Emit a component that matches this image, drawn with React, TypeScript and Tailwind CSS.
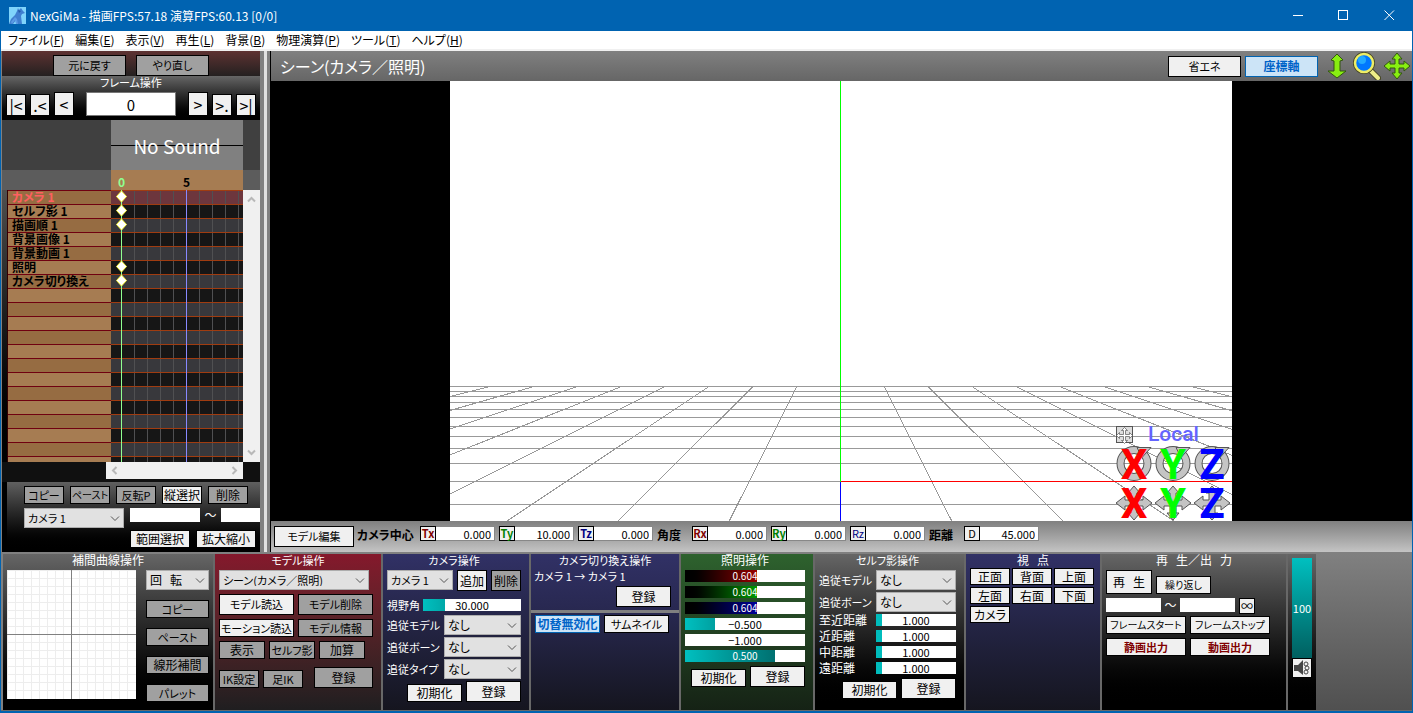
import { useId } from "react";
import type { ReactNode } from "react";
import clsx from "clsx";

const menus = [
  ["ファイル", "F"],
  ["編集", "E"],
  ["表示", "V"],
  ["再生", "L"],
  ["背景", "B"],
  ["物理演算", "P"],
  ["ツール", "T"],
  ["ヘルプ", "H"],
];

const tracks = [
  { name: "カメラ 1", key: true },
  { name: "セルフ影 1", key: true },
  { name: "描画順 1", key: true },
  { name: "背景画像 1", key: false },
  { name: "背景動画 1", key: false },
  { name: "照明", key: true },
  { name: "カメラ切り換え", key: true },
];

const ROW = 14;
const FRAME = 13;
const rows = Array.from({ length: 60 }, (_, i) => i);
const frames = Array.from({ length: 9 }, (_, i) => i);

type BtnProps = {
  children: ReactNode;
  className?: string;
  off?: boolean;
  label?: string;
};

const Btn = ({ children, className, off, label }: BtnProps) => (
  <button
    type="button"
    aria-label={label}
    className={clsx(
      "flex shrink-0 items-center justify-center whitespace-nowrap border border-black leading-none text-black",
      off ? "bg-[#a0a0a0]" : "bg-[#f0f0f0]",
      className
    )}
  >
    {children}
  </button>
);

type ComboProps = {
  value: string;
  label: string;
  id?: string;
  className?: string;
};

const Combo = ({ value, label, id, className }: ComboProps) => (
  <div className={clsx("relative h-5 shrink-0", className)}>
    <select
      id={id}
      aria-label={label}
      className="h-5 w-full appearance-none border border-[#adadad] bg-[#e1e1e1] pl-[3px] leading-none text-black"
    >
      <option>{value}</option>
    </select>
    <svg
      className="pointer-events-none absolute right-1 top-[7px]"
      width="10"
      height="7"
      fill="none"
      stroke="#555"
    >
      <path d="M1 1.5 5 5.5 9 1.5" />
    </svg>
  </div>
);

const ComboRow = ({ label, className }: { label: string; className: string }) => {
  const id = useId();
  return (
    <div className="flex h-5 items-center justify-between">
      <label htmlFor={id} className="whitespace-nowrap text-[11px]">
        {label}
      </label>
      <Combo id={id} value="なし" label={label} className={className} />
    </div>
  );
};

type SliderProps = {
  label: string;
  value: string;
  percent: number;
  fill: string;
  id?: string;
  className?: string;
};

const Slider = ({ label, value, percent, fill, id, className }: SliderProps) => {
  const light = percent > 50;
  return (
    <div className={clsx("relative h-3 bg-white", className)}>
      <div className={clsx("h-full", fill)} style={{ width: `${percent}%` }} />
      <span
        className={clsx(
          "absolute inset-0 text-center leading-3",
          light ? "text-[10px] text-white" : "text-[11px] text-black"
        )}
      >
        {value}
      </span>
      <input
        id={id}
        type="range"
        aria-label={label}
        defaultValue={percent}
        className="absolute inset-0 h-full w-full opacity-0"
      />
    </div>
  );
};

const TextBox = ({ label, className }: { label: string; className: string }) => (
  <input type="text" aria-label={label} className={clsx("h-[14px] bg-white px-1 text-black", className)} />
);

type PanelProps = { title: string; className: string; children: ReactNode; small?: boolean };

const Panel = ({ title, className, children, small }: PanelProps) => (
  <section className={clsx("shrink-0 border-r-2 border-[#686868] px-1 text-white", className)}>
    <h2 className={clsx("h-4 whitespace-pre text-center leading-3", small && "text-[11px]")}>{title}</h2>
    {children}
  </section>
);

const navy = "bg-linear-to-b from-[#313166] to-[#15151f]";
const gray = "bg-linear-to-b from-[#666] to-black";

const TitleBar = () => (
  <header className="flex h-[31px] shrink-0 items-center bg-[#0063b1] pl-2 text-white">
    <svg width="17" height="17" viewBox="0 0 17 17">
      <rect width="17" height="17" fill="#7fd4fb" />
      <path d="M0 17 2 12 6 8 8 4 9 1 10 3 12 1 14 4 16 6 13 7 12 9 13 17H8L7 13 4 17Z" fill="#3f7fd0" />
      <path d="M2 15 6 10 8 12 9 17H7L6 13 3 17Z" fill="#5b9be6" />
      <path d="M9 3 12 4 10 6Z" fill="#235aa5" />
    </svg>
    <h1 className="ml-1 font-['Noto_Sans_CJK_JP',sans-serif] text-[12px]">
      NexGiMa - 描画FPS:57.18 演算FPS:60.13 [0/0]
    </h1>
    <div className="ml-auto flex">
      <button type="button" aria-label="最小化" className="flex h-[30px] w-[46px] items-center justify-center">
        <svg width="11" height="11" stroke="#fff">
          <path d="M0 5.5H10" />
        </svg>
      </button>
      <button type="button" aria-label="最大化" className="flex h-[30px] w-[45px] items-center justify-center">
        <svg width="11" height="11" stroke="#fff" fill="none">
          <rect x=".5" y=".5" width="9" height="9" />
        </svg>
      </button>
      <button type="button" aria-label="閉じる" className="flex h-[30px] w-[46px] items-center justify-center">
        <svg width="11" height="11" stroke="#fff">
          <path d="M.5 .5 10 10M10 .5 .5 10" />
        </svg>
      </button>
    </div>
  </header>
);

const MenuBar = () => (
  <nav className="flex h-5 shrink-0 items-center gap-[11px] border-b-2 border-[#f0f0f0] bg-white pl-[7px] text-black">
    {menus.map(([name, key]) => (
      <button key={key} type="button" className="whitespace-nowrap leading-none">
        {name}(<u>{key}</u>)
      </button>
    ))}
  </nav>
);

const FrameControls = () => (
  <>
    <div className="flex h-[25px] shrink-0 justify-center gap-[10px] bg-linear-to-b from-[#5e3232] to-[#242020] pt-1">
      <Btn off className="h-[21px] w-[73px] text-[11px]">
        元に戻す
      </Btn>
      <Btn off className="h-[21px] w-[73px] text-[11px]">
        やり直し
      </Btn>
    </div>
    <div className={clsx("h-11 shrink-0 px-1", gray)}>
      <h2 className="h-4 text-center text-[11px] leading-3 text-white">フレーム操作</h2>
      <div className="flex items-end gap-1 text-[16px]">
        <Btn label="先頭" className="h-[22px] w-5">|&lt;</Btn>
        <Btn label="前のキー" className="h-[22px] w-5">.&lt;</Btn>
        <Btn label="前へ" className="h-6 w-5">&lt;</Btn>
        <input
          type="text"
          aria-label="フレーム"
          defaultValue="0"
          className="mx-2 h-6 min-w-0 flex-1 border border-[#777] bg-white text-center text-[15px] text-black"
        />
        <Btn label="次へ" className="h-6 w-5">&gt;</Btn>
        <Btn label="次のキー" className="h-[22px] w-5">&gt;.</Btn>
        <Btn label="末尾" className="h-[22px] w-5">&gt;|</Btn>
      </div>
    </div>
  </>
);

const TrackGrid = () => (
  <svg className="h-full w-[132px] shrink-0 bg-[#161616]" shapeRendering="crispEdges">
    {rows.map((i) => (
      <rect
        key={i}
        y={i * ROW}
        width="132"
        height={ROW}
        fill={i === 0 ? "#6d363d" : i % 2 ? "#161616" : "#38383c"}
      />
    ))}
    {frames.map((i) => (
      <rect key={i} x={10 + (i + 1) * FRAME} width="1" height="100%" fill="#505052" />
    ))}
    {rows.map((i) => (
      <rect key={i} y={i * ROW} width="132" height="1" fill="#a03c10" />
    ))}
    <rect x="75" width="1" height="100%" fill="#8888ff" />
    <rect x="10" width="1" height="100%" fill="#90ff90" />
    {tracks.map(
      (t, i) =>
        t.key && (
          <path
            key={t.name}
            d={`M10.5 ${i * ROW + 1}l5 5.5-5 5.5-5-5.5Z`}
            fill="#fff"
            stroke="#ffff40"
            shapeRendering="auto"
          />
        )
    )}
  </svg>
);

const Timeline = () => (
  <div className="flex min-h-0 flex-1 flex-col">
    <div className="flex h-[50px] shrink-0 bg-[#404040] pl-[109px] pr-[17px]">
      <div className="flex flex-1 items-center justify-center bg-[linear-gradient(#808080_25px,#000_25px,#000_26px,#808080_26px)] text-[19px] leading-none text-white">
        No Sound
      </div>
    </div>
    <div className="flex h-5 shrink-0 bg-[#5c5c5c] pl-[109px] pr-[17px]">
      <div className="flex flex-1 bg-[#a67c52] pl-1 pt-[5px] text-center text-[12px] font-bold leading-[14px]">
        {frames.map((i) => (
          <span key={i} className={clsx("w-[13px]", i === 0 ? "text-[#90ff90]" : "text-black")}>
            {i % 5 === 0 && i}
          </span>
        ))}
      </div>
    </div>
    <div className="flex min-h-0 flex-1 overflow-hidden bg-linear-to-b from-[#505050] to-black pl-[5px]">
      <ul className="w-[104px] shrink-0 border-l border-[#300]">
        {rows.map((i) => (
          <li
            key={i}
            className={clsx(
              "h-[14px] border-t border-[#700010] pl-1 font-bold leading-[12px]",
              i % 2 ? "bg-[#a67c52]" : "bg-[#966c42]",
              i === 0 ? "text-[#ff6060]" : "text-black"
            )}
          >
            {tracks[i]?.name}
          </li>
        ))}
      </ul>
      <TrackGrid />
      <div className="flex w-[17px] shrink-0 flex-col items-center justify-between bg-[#f0f0f0] py-[6px]">
        <svg width="9" height="7" fill="none" stroke="#b8b8b8" strokeWidth="2">
          <path d="M1 5.5 4.5 2 8 5.5" />
        </svg>
        <svg width="9" height="7" fill="none" stroke="#b8b8b8" strokeWidth="2">
          <path d="M1 1.5 4.5 5 8 1.5" />
        </svg>
      </div>
    </div>
    <div className="h-5 shrink-0 bg-[#101010] pl-[104px] pr-[17px]">
      <div className="flex h-[17px] items-center justify-between bg-[#f0f0f0] px-[5px]">
        <svg width="7" height="9" fill="none" stroke="#b8b8b8" strokeWidth="2">
          <path d="M5.5 1 2 4.5 5.5 8" />
        </svg>
        <svg width="7" height="9" fill="none" stroke="#b8b8b8" strokeWidth="2">
          <path d="M1.5 1 5 4.5 1.5 8" />
        </svg>
      </div>
    </div>
  </div>
);

const KeyControls = () => (
  <div className="h-[70px] shrink-0 bg-black pl-[5px]">
    <div className="flex h-full flex-col overflow-hidden bg-linear-to-b from-[#606060] to-black pl-[17px] pt-1">
      <div className="flex gap-[6px]">
        <Btn off className="h-[18px] w-10 text-[11px]">コピー</Btn>
        <Btn off className="h-[18px] w-10 text-[10px]">ペースト</Btn>
        <Btn off className="h-[18px] w-10 text-[11px]">反転P</Btn>
        <Btn className="h-[18px] w-10">縦選択</Btn>
        <Btn off className="h-[18px] w-10">削除</Btn>
      </div>
      <div className="mt-1 flex h-[22px] text-white">
        <Combo value="カメラ 1" label="対象" className="w-[100px] text-[11px]" />
        <TextBox label="開始フレーム" className="ml-[6px] w-[70px] shrink-0" />
        <span className="w-[21px] shrink-0 text-center leading-[14px]">～</span>
        <TextBox label="終了フレーム" className="min-w-0 flex-1" />
      </div>
      <div className="flex justify-end gap-[6px] pr-1">
        <Btn className="h-[18px] w-[60px]">範囲選択</Btn>
        <Btn className="h-[18px] w-[60px]">拡大縮小</Btn>
      </div>
    </div>
  </div>
);

const floorY = [305, 310, 315, 321, 328, 336, 345, 355, 367, 382, 400, 423];
const floorX = [-10, -9, -8, -7, -6, -5, -4, -3, -2, -1, 1, 2, 3, 4, 5, 6, 7, 8, 9, 10];

const Gizmo = () => {
  const axes = [
    { name: "X", x: 684, color: "#ff0000" },
    { name: "Y", x: 723, color: "#00ff00" },
    { name: "Z", x: 762, color: "#0000ff" },
  ];
  return (
    <g fill="#c4c4c4" stroke="#555">
      <rect x="666.5" y="345.5" width="16" height="16" fill="#ddd" />
      <path
        d="M674.5 346.5l3 3h-2v4h4v-2l3 3-3 3v-2h-4v4h2l-3 3-3-3h2v-4h-4v2l-3-3 3-3v2h4v-4h-2z"
        fill="#fff"
        strokeWidth=".7"
      />
      <text
        x="698"
        y="360"
        fill="#6464ff"
        stroke="none"
        fontSize="21"
        fontWeight="500"
        fontFamily="Roboto, sans-serif"
      >
        Local
      </text>
      {axes.map((a) => (
        <g key={a.name}>
          <circle cx={a.x} cy="382.5" r="13.5" fill="none" strokeWidth="8" />
          <circle cx={a.x} cy="382.5" r="13.5" fill="none" stroke="#c4c4c4" strokeWidth="6" />
          <path d={`M${a.x + 3} 366.5h14l-9 10z`} />
          <path
            d={`M${a.x} 405l6 7h-3v7h6v-4l9 7-9 7v-4h-6v7h3l-6 7-6-7h3v-7h-6v4l-9-7 9-7v4h6v-7h-3z`}
          />
          {[398, 437].map((y) => (
            <text
              key={y}
              x={a.x}
              y={y}
              textAnchor="middle"
              fill={a.color}
              stroke="none"
              fontSize="42"
              fontWeight="700"
              fontFamily="Roboto, sans-serif"
            >
              {a.name}
            </text>
          ))}
        </g>
      ))}
    </g>
  );
};

const Viewport = () => (
  <div className="flex min-h-0 flex-1 justify-center overflow-hidden bg-black pr-px">
    <svg viewBox="0 0 782 440" className="h-full bg-white">
      <g stroke="#999" shapeRendering="crispEdges">
        {floorY.map((y) => (
          <path key={y} d={`M0 ${y}.5H782`} />
        ))}
        {floorX.map((k) => (
          <path key={k} d={`M${390.5 + k * 43.8} 305.5L${390.5 + k * 111.2} 440`} />
        ))}
      </g>
      <g shapeRendering="crispEdges">
        <rect x="390" width="1" height="401" fill="#00ff00" />
        <rect x="391" y="400" width="391" height="1" fill="#ff0000" />
        <rect x="390" y="401" width="1" height="39" fill="#0000ff" />
      </g>
      <Gizmo />
    </svg>
  </div>
);

const SceneHeader = () => (
  <div className="flex h-[30px] shrink-0 items-center bg-linear-to-b from-[#808080] to-[#666] pl-[9px] pr-px">
    <h2 className="text-[16px] text-white">シーン(カメラ／照明)</h2>
    <Btn className="ml-auto h-[21px] w-[73px] text-[11px]">省エネ</Btn>
    <button
      type="button"
      className="ml-1 h-[21px] w-[73px] border border-[#0063b1] bg-[#cce4f7] font-bold leading-none text-[#0063c8]"
    >
      座標軸
    </button>
    <div className="ml-[9px] flex items-center gap-[6px]">
      <button type="button" aria-label="上下移動">
        <svg width="20" height="26" viewBox="0 0 20 26" fill="#8e1" stroke="#351">
          <path d="M10 1 16 7 13 8V18H19L10 25 1 18H7V8L4 7Z" />
        </svg>
      </button>
      <button type="button" aria-label="拡大">
        <svg width="28" height="28" viewBox="0 0 28 28">
          <path d="m17 18 8 8" stroke="#442" strokeWidth="6" strokeLinecap="round" />
          <path d="m17 18 8 8" stroke="#ee8" strokeWidth="4" strokeLinecap="round" />
          <circle cx="11" cy="11" r="9" fill="#18f" stroke="#442" strokeWidth="4" />
          <circle cx="11" cy="11" r="9" fill="#07f" stroke="#ee6" strokeWidth="2.5" />
          <circle cx="9" cy="8" r="4" fill="#2af" />
        </svg>
      </button>
      <button type="button" aria-label="移動" className="-ml-1">
        <svg width="28" height="28" viewBox="0 0 28 28" fill="#8e1" stroke="#351">
          <path d="m14 1 5 6h-3v5h5V9l6 5-6 5v-3h-5v5h3l-5 6-5-6h3v-5H7v3l-6-5 6-5v3h5V7H9Z" />
        </svg>
      </button>
    </div>
  </div>
);

const Coord = ({ name, value, color }: { name: string; value: string; color: string }) => {
  const id = useId();
  return (
    <div className="flex h-[15px]">
      <label
        htmlFor={id}
        className={clsx(
          "w-4 border border-black bg-[#f0f0f0] text-center text-[11px] leading-[13px]",
          color
        )}
      >
        {name}
      </label>
      <input
        id={id}
        type="text"
        defaultValue={value}
        className="w-[59px] border border-l-0 border-[#888] bg-white pr-[3px] text-right text-[11px] leading-none text-black"
      />
    </div>
  );
};

const CoordBar = () => (
  <div className="flex h-[31px] shrink-0 items-start bg-linear-to-b from-[#808080] to-[#c4c4c4] pl-[3px] pt-[5px] text-black">
    <Btn className="h-[21px] w-20 text-[11px]">モデル編集</Btn>
    <b className="w-[66px] shrink-0 pl-[3px] leading-[18px]">カメラ中心</b>
    <div className="flex gap-1">
      <Coord name="Tx" value="0.000" color="font-bold text-[#800000]" />
      <Coord name="Ty" value="10.000" color="font-bold text-[#008000]" />
      <Coord name="Tz" value="0.000" color="font-bold text-[#000080]" />
    </div>
    <b className="w-[39px] shrink-0 pl-1 leading-[18px]">角度</b>
    <div className="flex gap-1">
      <Coord name="Rx" value="0.000" color="font-bold text-[#800000]" />
      <Coord name="Ry" value="0.000" color="font-bold text-[#008000]" />
      <Coord name="Rz" value="0.000" color="text-[#000080]" />
    </div>
    <b className="w-[39px] shrink-0 pl-1 leading-[18px]">距離</b>
    <Coord name="D" value="45.000" color="text-black" />
  </div>
);

const CurvePanel = () => (
  <Panel title="補間曲線操作" className={clsx("w-[212px]", gray)}>
    <div className="flex justify-between">
      <svg width="129" height="129" className="bg-white" shapeRendering="crispEdges">
        {Array.from({ length: 16 }, (_, i) => (
          <path key={i} d={`M${i * 8 + 0.5} 0V129M0 ${i * 8 + 0.5}H129`} stroke="#ededed" />
        ))}
        <path d="M64.5 0V129M0 64.5H129" stroke="#808080" />
      </svg>
      <div className="flex w-[63px] flex-col gap-[10px] text-[11px]">
        <Combo value={"回\u00a0\u00a0\u00a0転"} label="補間対象" className="w-full text-[12px]" />
        <Btn off className="h-[18px]">コピー</Btn>
        <Btn off className="h-[18px]">ペースト</Btn>
        <Btn off className="h-[18px] text-[12px]">線形補間</Btn>
        <Btn off className="h-[18px]">パレット</Btn>
      </div>
    </div>
  </Panel>
);

const ModelPanel = () => (
  <Panel title="モデル操作" small className="w-[168px] bg-linear-to-b from-[#85182c] to-[#1f1e20] text-[11px]">
    <Combo value="シーン(カメラ／照明)" label="モデル" className="w-[150px]" />
    <div className="mt-1 flex gap-1">
      <Btn className="h-[21px] w-[75px]">モデル読込</Btn>
      <Btn off className="h-[21px] w-[75px]">モデル削除</Btn>
    </div>
    <div className="mt-1 flex gap-1">
      <Btn className="h-[18px] w-[75px]">モーション読込</Btn>
      <Btn off className="h-[18px] w-[75px]">モデル情報</Btn>
    </div>
    <div className="mt-1 flex gap-1">
      <Btn off className="h-[18px] w-[46px] text-[12px]">表示</Btn>
      <Btn off className="h-[18px] w-[46px]">セルフ影</Btn>
      <Btn off className="h-[18px] w-[46px] text-[12px]">加算</Btn>
    </div>
    <div className="mt-2 flex items-end gap-1">
      <Btn off className="h-[18px] w-10">IK設定</Btn>
      <Btn off className="h-[18px] w-10">足IK</Btn>
      <Btn off className="ml-[7px] h-[21px] w-[59px] text-[12px]">登録</Btn>
    </div>
  </Panel>
);

const ResetRegister = ({ className }: { className: string }) => (
  <div className={clsx("flex items-end justify-end gap-1", className)}>
    <Btn className="h-[18px] w-[55px]">初期化</Btn>
    <Btn className="h-[21px] w-[55px]">登録</Btn>
  </div>
);

const CameraPanel = () => {
  const id = useId();
  return (
    <Panel title="カメラ操作" small className={clsx("w-[148px] pr-2", navy)}>
      <div className="flex justify-between">
        <Combo value="カメラ 1" label="カメラ" className="w-[66px] text-[11px]" />
        <Btn className="h-[21px] w-[30px]">追加</Btn>
        <Btn off className="h-[21px] w-[30px]">削除</Btn>
      </div>
      <div className="mb-1 mt-2 flex items-center justify-between whitespace-nowrap leading-3">
        <label htmlFor={id} className="text-[11px]">
          視野角
        </label>
        <Slider
          id={id}
          label="視野角"
          value="30.000"
          percent={22}
          fill="bg-linear-to-r from-[#00c0c0] to-[#00a8a8]"
          className="w-[98px]"
        />
      </div>
      <div className="flex flex-col gap-[2px]">
        <ComboRow label="追従モデル" className="w-[77px]" />
        <ComboRow label="追従ボーン" className="w-[77px]" />
        <ComboRow label="追従タイプ" className="w-[77px]" />
      </div>
      <ResetRegister className="mt-[2px]" />
    </Panel>
  );
};

const SwitchPanel = () => (
  <section className="flex w-[150px] shrink-0 flex-col border-r-2 border-[#686868] text-[11px] text-white">
    <div className="h-[59px] shrink-0 border-b-3 border-[#808080] bg-linear-to-b from-[#313166] to-[#282850] pr-2">
      <h2 className="h-4 pl-2 text-center leading-3">カメラ切り換え操作</h2>
      <p className="pl-[3px] leading-3">カメラ 1 → カメラ 1</p>
      <Btn className="ml-auto mt-1 h-[21px] w-[55px] text-[12px]">登録</Btn>
    </div>
    <div className="flex flex-1 items-start gap-1 bg-linear-to-b from-[#282850] to-[#15151f] pl-1 pt-[2px]">
      <button
        type="button"
        className="h-[18px] w-[65px] border border-[#0063b1] bg-[#cce4f7] text-[12px] font-bold leading-none text-[#0063c8]"
      >
        切替無効化
      </button>
      <Btn className="h-[18px] w-[65px]">サムネイル</Btn>
    </div>
  </section>
);

const teal = "bg-linear-to-r from-[#00c0c0] to-[#00a0a0]";

const lights = [
  { label: "赤", value: "0.604", percent: 60, fill: "bg-linear-to-r from-black to-[#990000]" },
  { label: "緑", value: "0.604", percent: 60, fill: "bg-linear-to-r from-black to-[#009900]" },
  { label: "青", value: "0.604", percent: 60, fill: "bg-linear-to-r from-black to-[#000099]" },
  { label: "向きX", value: "−0.500", percent: 25, fill: teal },
  { label: "向きY", value: "−1.000", percent: 0, fill: teal },
  { label: "向きZ", value: "0.500", percent: 75, fill: "bg-linear-to-r from-[#00c0c0] to-[#007070]" },
];

const LightPanel = () => (
  <Panel title="照明操作" className="w-[134px] bg-linear-to-b from-[#2e622e] to-[#152215] pr-2">
    <div className="flex flex-col gap-1">
      {lights.map((light) => (
        <Slider key={light.label} {...light} />
      ))}
    </div>
    <ResetRegister className="mt-1" />
  </Panel>
);

const distances = ["至近距離", "近距離", "中距離", "遠距離"];

const ShadowPanel = () => (
  <Panel title="セルフ影操作" small className={clsx("w-[151px] pr-2", gray)}>
    <div className="flex flex-col gap-[2px]">
      <ComboRow label="追従モデル" className="w-20" />
      <ComboRow label="追従ボーン" className="w-20" />
    </div>
    <div className="mt-[2px] flex flex-col gap-1">
      {distances.map((name) => (
        <div key={name} className="flex items-center justify-between leading-3">
          <span>{name}</span>
          <Slider label={name} value="1.000" percent={8} fill="bg-[#00bcbc]" className="w-20" />
        </div>
      ))}
    </div>
    <ResetRegister className="mt-1" />
  </Panel>
);

const ViewPanel = () => (
  <Panel title="視   点" className={clsx("w-[136px]", navy)}>
    <div className="-mt-[2px] flex flex-wrap gap-[2px]">
      {["正面", "背面", "上面", "左面", "右面", "下面", "カメラ"].map((name) => (
        <Btn key={name} className="h-[17px] w-10">
          {name}
        </Btn>
      ))}
    </div>
  </Panel>
);

const OutputPanel = () => (
  <Panel title="再   生／出   力" className={clsx("w-[186px]", gray)}>
    <div className="flex items-end gap-1">
      <Btn className="h-6 w-[46px] whitespace-pre">{"再   生"}</Btn>
      <Btn className="h-[18px] w-[55px] text-[10px]">繰り返し</Btn>
    </div>
    <div className="mt-1 flex h-[18px]">
      <TextBox label="再生開始" className="w-[55px]" />
      <span className="w-[19px] text-center leading-[14px]">～</span>
      <TextBox label="再生終了" className="w-[55px]" />
      <Btn label="無限" className="ml-1 h-4 w-4">∞</Btn>
    </div>
    <div className="grid grid-cols-[80px_80px] gap-1 text-[11px]">
      <Btn className="h-[18px] text-[10px]">フレームスタート</Btn>
      <Btn className="h-[18px] text-[10px]">フレームストップ</Btn>
      <Btn className="h-[18px]">
        <b className="text-[#800000]">静画出力</b>
      </Btn>
      <Btn className="h-[18px]">
        <b className="text-[#800000]">動画出力</b>
      </Btn>
    </div>
  </Panel>
);

const VolumePanel = () => (
  <section className={clsx("w-7 shrink-0 px-1 pt-1", gray)}>
    <div className="relative flex h-[100px] items-center justify-center bg-linear-to-b from-[#00c0c0] to-[#006060] text-[11px] text-white">
      100
      <input
        type="range"
        aria-label="音量"
        defaultValue={100}
        className="absolute inset-0 h-full w-full opacity-0"
      />
    </div>
    <Btn label="ミュート" className="h-5 w-5">
      <svg width="16" height="16" viewBox="0 0 16 16" fill="#444">
        <path d="M0 5H4L9 0V15L4 11H0Z" />
        <g fill="none" stroke="#444">
          <circle cx="12" cy="4" r="2" />
          <circle cx="13" cy="8" r="2" />
          <circle cx="12" cy="12" r="2" />
        </g>
      </svg>
    </Btn>
  </section>
);

export default function App() {
  return (
    <div className="flex h-screen min-h-[560px] flex-col overflow-hidden border-x border-b-2 border-[#0063b1] bg-[#808080] font-['Noto_Sans_CJK_JP','Liberation_Sans',sans-serif] text-[12px] leading-4 [font-feature-settings:'palt']">
      <TitleBar />
      <MenuBar />
      <main className="flex min-h-0 flex-1 pl-px">
        <aside className="flex w-[258px] shrink-0 flex-col overflow-hidden">
          <FrameControls />
          <Timeline />
          <KeyControls />
        </aside>
        <div className="w-[10px] shrink-0 border-l-4 border-r-3 border-[#808080] bg-[#e0e0e0]" />
        <div className="flex min-w-0 flex-1 flex-col border-l border-black">
          <SceneHeader />
          <Viewport />
          <CoordBar />
        </div>
      </main>
      <footer className="flex h-[159px] shrink-0 border-b border-t-2 border-b-[#686868] border-t-[#808080] pl-[2px]">
        <CurvePanel />
        <ModelPanel />
        <CameraPanel />
        <SwitchPanel />
        <LightPanel />
        <ShadowPanel />
        <ViewPanel />
        <OutputPanel />
        <VolumePanel />
        <div className="flex-1 bg-linear-to-b from-[#808080] to-[#505050]" />
      </footer>
    </div>
  );
}
